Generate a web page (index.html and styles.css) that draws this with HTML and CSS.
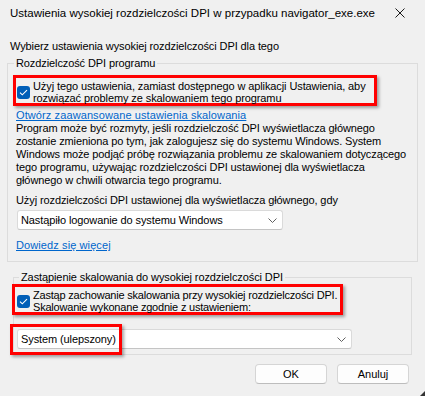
FILE: index.html
```html
<!DOCTYPE html>
<html lang="pl">
<head>
  <meta charset="UTF-8" />
  <meta name="viewport" content="width=device-width, initial-scale=1.0" />
  <title>Ustawienia wysokiej rozdzielczości DPI</title>
  <link rel="stylesheet" href="styles.css">
</head>
<body>
  <div class="window">
    <div class="titlebar">
      <span class="title">Ustawienia wysokiej rozdzielczości DPI w przypadku navigator_exe.exe</span>
      <svg class="close" width="10" height="10" viewBox="0 0 10 10">
        <path d="M0.5 0.5L9.5 9.5M9.5 0.5L0.5 9.5" stroke="#1a1a1a" stroke-width="1" fill="none" />
      </svg>
    </div>

    <div class="content">
      <p class="intro">Wybierz ustawienia wysokiej rozdzielczości DPI dla tego</p>

      <!-- PROGRAM DPI -->
      <fieldset class="group group-app">
        <legend>Rozdzielczość DPI programu</legend>
        <label class="check mark mark-app">
          <span class="box">
            <svg width="9" height="7" viewBox="0 0 9 7"><path d="M1 3.6L3.3 5.8L8 1.2" stroke="#fff" stroke-width="1.1" fill="none" /></svg>
          </span>
          <span>Użyj tego ustawienia, zamiast dostępnego w aplikacji Ustawienia, aby<br>rozwiązać problemy ze skalowaniem tego programu</span>
        </label>
        <a class="link" href="#">Otwórz zaawansowane ustawienia skalowania</a>
        <p class="desc">Program może być rozmyty, jeśli rozdzielczość DPI wyświetlacza głównego<br>zostanie zmieniona po tym, jak zalogujesz się do systemu Windows. System<br>Windows może podjąć próbę rozwiązania problemu ze skalowaniem dotyczącego<br>tego programu, używając rozdzielczości DPI ustawionej dla wyświetlacza<br>głównego w chwili otwarcia tego programu.</p>
        <p class="hint">Użyj rozdzielczości DPI ustawionej dla wyświetlacza głównego, gdy</p>
        <div class="select sel-logon">
          <span>Nastąpiło logowanie do systemu Windows</span>
          <svg class="chev" width="9" height="5" viewBox="0 0 9 5"><path d="M0.5 0.5L4.5 4.5L8.5 0.5" stroke="#606060" fill="none" /></svg>
        </div>
        <a class="link more" href="#">Dowiedz się więcej</a>
      </fieldset>

      <!-- OVERRIDE -->
      <fieldset class="group group-override">
        <legend>Zastąpienie skalowania do wysokiej rozdzielczości DPI</legend>
        <label class="check mark mark-override">
          <span class="box">
            <svg width="9" height="7" viewBox="0 0 9 7"><path d="M1 3.6L3.3 5.8L8 1.2" stroke="#fff" stroke-width="1.1" fill="none" /></svg>
          </span>
          <span class="tight">Zastąp zachowanie skalowania przy wysokiej rozdzielczości DPI.<br>Skalowanie wykonane zgodnie z ustawieniem:</span>
        </label>
        <div class="select-wrap">
          <div class="select sel-mode">
            <span>System (ulepszony)</span>
            <svg class="chev" width="9" height="5" viewBox="0 0 9 5"><path d="M0.5 0.5L4.5 4.5L8.5 0.5" stroke="#606060" fill="none" /></svg>
          </div>
          <span class="mark-box"></span>
        </div>
      </fieldset>

      <div class="buttons">
        <button class="btn">OK</button>
        <button class="btn">Anuluj</button>
      </div>
    </div>
    <span class="grip"></span>
  </div>
</body>
</html>
```

FILE: styles.css
```css
* { box-sizing: border-box; }
html, body { margin: 0; }
body { background: #f0f0f0; font-family: "Liberation Sans", Arial, sans-serif; font-size: 11px; line-height: 13px; letter-spacing: -0.1px; color: #000; }

.window { position: relative; width: 425px; height: 396px; overflow: hidden; }

.titlebar { display: flex; align-items: center; justify-content: space-between; height: 26px; padding: 0 20px 0 10px; font-size: 11.5px; letter-spacing: 0; white-space: nowrap; }
.close { display: block; }

.content { padding: 0 0 0 7px; }
.intro { margin: 14px 0 0 3px; }

.group { margin: 4px 0 0; padding: 5px 8px 9px; border: 1px solid #dcdcdc; min-width: 0; }
.group legend { padding: 0 2px; margin-left: -2px; line-height: 13px; }
.group-app { width: 411px; }
.group-override { width: 399px; margin: 9px 0 0 6px; padding: 0 3px 5px; }
.group-override legend { margin-left: 2px; }

.check { display: flex; align-items: center; white-space: nowrap; }
.box { display: flex; align-items: center; justify-content: center; flex: none; width: 13px; height: 13px; margin-right: 3px; border-radius: 3px; background: #005fb8; }

.mark { height: 31px; padding-top: 3px; line-height: 12px; border: 3px solid #f00; box-shadow: 2px 2px 3px rgba(0, 0, 0, 0.35); }
.mark-app { width: 364px; margin-left: -3px; padding-left: 1px; }
.mark-override { width: 331px; margin-left: -5px; padding-left: 2px; }
.tight { letter-spacing: -0.2px; }

.link { display: block; margin-top: 3px; color: #0066cc; text-decoration: underline; letter-spacing: 0.1px; width: fit-content; }
.desc { margin: 0; white-space: nowrap; }
.hint { margin: 7px 0 0; }

.select { display: flex; align-items: center; justify-content: space-between; height: 20px; padding: 0 5px 0 3px; background: #fff; border: 1px solid #dadada; border-bottom-color: #c4c4c4; border-radius: 3px; }
.chev { display: block; }
.sel-logon { width: 266px; margin-top: 3px; margin-left: 1px; }
.more { margin-top: 9px; }

.select-wrap { position: relative; margin-top: 14px; }
.sel-mode { width: 335px; }
.mark-box { position: absolute; left: -7px; top: -5px; width: 112px; height: 31px; border: 3px solid #f00; box-shadow: 2px 2px 3px rgba(0, 0, 0, 0.35); }

.buttons { display: flex; justify-content: flex-end; gap: 10px; margin: 9px 16px 0 0; }
.btn { width: 72px; height: 20px; padding: 0; font: inherit; color: #000; background: #fdfdfd; border: 1px solid #d5d5d5; border-bottom-color: #bdbdbd; border-radius: 4px; }

.grip { position: absolute; right: 0; bottom: 0; width: 0; height: 0; border-left: 5px solid transparent; border-bottom: 5px solid #333; }
```
